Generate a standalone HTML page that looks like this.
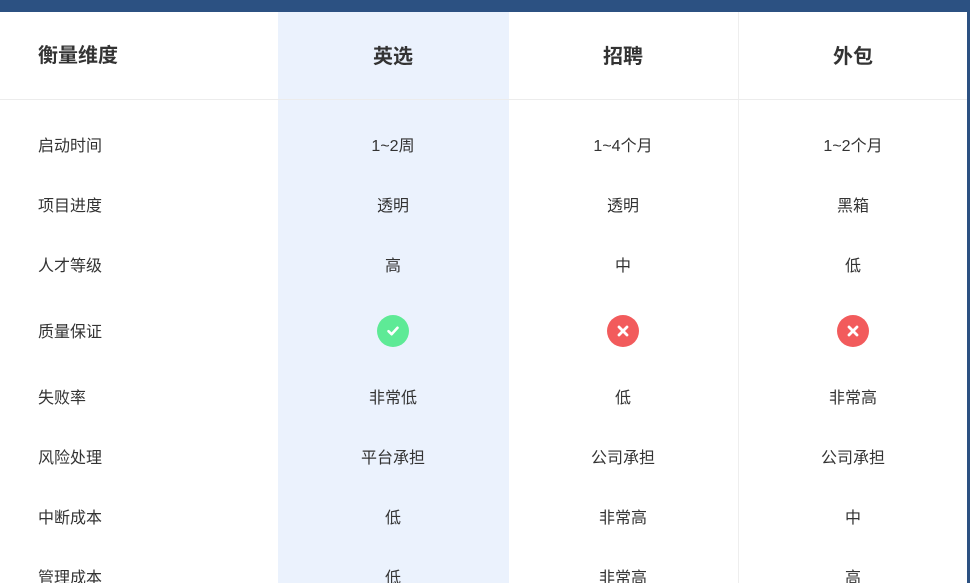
<!DOCTYPE html>
<html><head><meta charset="utf-8"><style>
*{margin:0;padding:0;box-sizing:border-box}
html{width:970px;height:583px;overflow:hidden}
body{width:970px;height:583px;overflow:hidden;background:#fff;position:relative;font-family:"Liberation Sans","Noto Sans CJK SC",sans-serif;color:#333}
.top{position:absolute;left:0;top:0;width:970px;height:12px;background:#2c5182}
.rb{position:absolute;right:0;top:0;width:3px;height:583px;background:#2c5182}
.hl{position:absolute;left:278px;top:12px;width:231px;height:571px;background:#ebf2fd}
.vl{position:absolute;left:738px;top:12px;width:1px;height:571px;background:#eee}
.hr{position:absolute;left:0;top:99px;width:967px;height:1px;background:#ececec}
.t{position:absolute;font-size:16px;line-height:20px;white-space:nowrap}
.last{height:14px;overflow:hidden}
.h{font-size:20px;line-height:24px;font-weight:bold;color:#333}
.c{transform:translateX(-50%)}
.ic{position:absolute;width:32px;height:32px;border-radius:50%;display:flex;align-items:center;justify-content:center}
</style></head><body>
<div class="top"></div><div class="hl"></div><div class="vl"></div><div class="hr"></div><div class="rb"></div>
<div class="t h" style="left:38px;top:44px">衡量维度</div>
<div class="t h c" style="left:393px;top:45px">英选</div>
<div class="t h c" style="left:623px;top:45px">招聘</div>
<div class="t h c" style="left:853px;top:45px">外包</div>

<div class="t" style="left:38px;top:137px">启动时间</div>
<div class="t c" style="left:393px;top:137px">1~2周</div>
<div class="t c" style="left:623px;top:137px">1~4个月</div>
<div class="t c" style="left:853px;top:137px">1~2个月</div>

<div class="t" style="left:38px;top:197px">项目进度</div>
<div class="t c" style="left:393px;top:197px">透明</div>
<div class="t c" style="left:623px;top:197px">透明</div>
<div class="t c" style="left:853px;top:197px">黑箱</div>

<div class="t" style="left:38px;top:257px">人才等级</div>
<div class="t c" style="left:393px;top:257px">高</div>
<div class="t c" style="left:623px;top:257px">中</div>
<div class="t c" style="left:853px;top:257px">低</div>

<div class="t" style="left:38px;top:323px">质量保证</div>
<div class="ic" style="left:377px;top:315px;background:#5eea96"><svg width="14" height="14" viewBox="0 0 14 14"><path d="M2.5 7.2L5.6 10.2L11.5 3.8" stroke="#fff" stroke-width="2.6" fill="none" stroke-linecap="round" stroke-linejoin="round"/></svg></div>
<div class="ic" style="left:607px;top:315px;background:#f25b5c"><svg width="14" height="14" viewBox="0 0 14 14"><path d="M3 3L11 11M11 3L3 11" stroke="#fff" stroke-width="2.8" stroke-linecap="round"/></svg></div>
<div class="ic" style="left:837px;top:315px;background:#f25b5c"><svg width="14" height="14" viewBox="0 0 14 14"><path d="M3 3L11 11M11 3L3 11" stroke="#fff" stroke-width="2.8" stroke-linecap="round"/></svg></div>

<div class="t" style="left:38px;top:389px">失败率</div>
<div class="t c" style="left:393px;top:389px">非常低</div>
<div class="t c" style="left:623px;top:389px">低</div>
<div class="t c" style="left:853px;top:389px">非常高</div>

<div class="t" style="left:38px;top:449px">风险处理</div>
<div class="t c" style="left:393px;top:449px">平台承担</div>
<div class="t c" style="left:623px;top:449px">公司承担</div>
<div class="t c" style="left:853px;top:449px">公司承担</div>

<div class="t" style="left:38px;top:509px">中断成本</div>
<div class="t c" style="left:393px;top:509px">低</div>
<div class="t c" style="left:623px;top:509px">非常高</div>
<div class="t c" style="left:853px;top:509px">中</div>

<div class="t last" style="left:38px;top:569px">管理成本</div>
<div class="t c last" style="left:393px;top:569px">低</div>
<div class="t c last" style="left:623px;top:569px">非常高</div>
<div class="t c last" style="left:853px;top:569px">高</div>
</body></html>
